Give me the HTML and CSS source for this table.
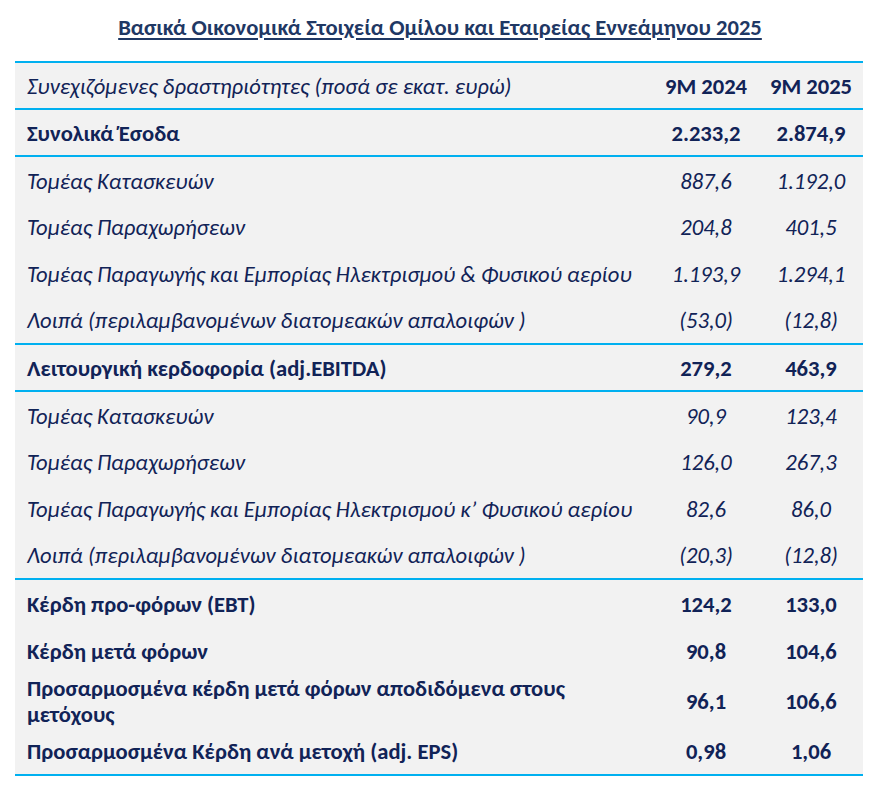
FILE: index.html
```html
<!DOCTYPE html>
<html lang="el">
<head>
<meta charset="utf-8">
<title>Βασικά Οικονομικά Στοιχεία</title>
<link rel="stylesheet" href="styles.css">
</head>
<body>
<h1 class="title">Βασικά Οικονομικά Στοιχεία Ομίλου και Εταιρείας Εννεάμηνου 2025</h1>
<div class="table">
  <div class="group">
    <div class="row h45 head">
      <div class="label it">Συνεχιζόμενες δραστηριότητες (ποσά σε εκατ. ευρώ)</div>
      <div class="num b">9M 2024</div>
      <div class="num b">9M 2025</div>
    </div>
  </div>
  <div class="group">
    <div class="row h45">
      <div class="label b">Συνολικά Έσοδα</div>
      <div class="num b">2.233,2</div>
      <div class="num b">2.874,9</div>
    </div>
  </div>
  <div class="group">
    <div class="row h47">
      <div class="label it">Τομέας Κατασκευών</div>
      <div class="num it">887,6</div>
      <div class="num it">1.192,0</div>
    </div>
    <div class="row h46">
      <div class="label it">Τομέας Παραχωρήσεων</div>
      <div class="num it">204,8</div>
      <div class="num it">401,5</div>
    </div>
    <div class="row h47">
      <div class="label it">Τομέας Παραγωγής και Εμπορίας Ηλεκτρισμού &amp; Φυσικού αερίου</div>
      <div class="num it">1.193,9</div>
      <div class="num it">1.294,1</div>
    </div>
    <div class="row h46">
      <div class="label it">Λοιπά (περιλαμβανομένων διατομεακών απαλοιφών )</div>
      <div class="num it">(53,0)</div>
      <div class="num it">(12,8)</div>
    </div>
  </div>
  <div class="group">
    <div class="row h45">
      <div class="label b">Λειτουργική κερδοφορία (adj.EBITDA)</div>
      <div class="num b">279,2</div>
      <div class="num b">463,9</div>
    </div>
  </div>
  <div class="group">
    <div class="row h47">
      <div class="label it">Τομέας Κατασκευών</div>
      <div class="num it">90,9</div>
      <div class="num it">123,4</div>
    </div>
    <div class="row h46">
      <div class="label it">Τομέας Παραχωρήσεων</div>
      <div class="num it">126,0</div>
      <div class="num it">267,3</div>
    </div>
    <div class="row h47">
      <div class="label it">Τομέας Παραγωγής και Εμπορίας Ηλεκτρισμού κ’ Φυσικού αερίου</div>
      <div class="num it">82,6</div>
      <div class="num it">86,0</div>
    </div>
    <div class="row h46">
      <div class="label it">Λοιπά (περιλαμβανομένων διατομεακών απαλοιφών )</div>
      <div class="num it">(20,3)</div>
      <div class="num it">(12,8)</div>
    </div>
  </div>
  <div class="group">
    <div class="row h48">
      <div class="label b">Κέρδη προ-φόρων (EBT)</div>
      <div class="num b">124,2</div>
      <div class="num b">133,0</div>
    </div>
    <div class="row h46">
      <div class="label b">Κέρδη μετά φόρων</div>
      <div class="num b">90,8</div>
      <div class="num b">104,6</div>
    </div>
    <div class="row h54">
      <div class="label b two">Προσαρμοσμένα κέρδη μετά φόρων αποδιδόμενα στους<br>μετόχους</div>
      <div class="num b">96,1</div>
      <div class="num b">106,6</div>
    </div>
    <div class="row h46">
      <div class="label b">Προσαρμοσμένα Κέρδη ανά μετοχή (adj. EPS)</div>
      <div class="num b">0,98</div>
      <div class="num b">1,06</div>
    </div>
  </div>
</div>
</body>
</html>
```

FILE: styles.css
```css
html, body {
  margin: 0;
  padding: 0;
  background: #ffffff;
}

body {
  font-family: "Carlito", "Noto Sans", "DejaVu Sans", sans-serif;
  color: #112357;
  font-size: 22.6px;
}

.title {
  margin: 15px 0 0 0;
  height: 24px;
  line-height: 24px;
  text-align: center;
  font-size: 22.6px;
  font-weight: 700;
  color: #1f3864;
  text-decoration: underline;
  text-underline-offset: 3px;
  text-decoration-thickness: 1.5px;
}

.table {
  margin: 22px 0 0 15px;
  width: 848px;
  background: #f2f2f2;
  border-top: 2px solid #00b0f0;
}

.group {
  border-bottom: 2px solid #00b0f0;
}

.row {
  display: grid;
  grid-template-columns: 634px 114px 100px;
  align-items: center;
}

.h45 { height: 45px; }
.h46 { height: 46px; }
.h47 { height: 47px; }
.h48 { height: 48px; }
.h54 { height: 54px; }

.label {
  padding-left: 12px;
  white-space: nowrap;
}

.two {
  line-height: 26px;
}

.num {
  text-align: center;
  white-space: nowrap;
}

.num:last-child {
  padding-right: 4px;
}

.it {
  font-style: italic;
}

.b {
  font-weight: 700;
}
```
